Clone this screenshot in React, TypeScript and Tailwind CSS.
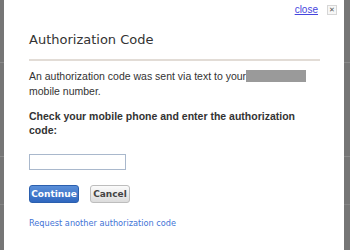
import React from "react";

function Strip({ w }: { w: string }) {
  return (
    <div className={`${w} h-full bg-[#767676] flex flex-col`}>
      <div className="h-[63px] border-b border-[#8a8a8a]" />
      <div className="h-[94px] border-b border-[#8a8a8a]" />
      <div className="h-[48px] border-b border-[#858585]" />
      <div className="flex-1" />
    </div>
  );
}

export default function App() {
  return (
    <div className="w-[350px] h-[250px] overflow-hidden flex bg-[#767676]">
      <Strip w="w-[4px]" />
      <div className="w-[340px] h-full bg-white flex flex-col">
        <div className="flex justify-end items-center gap-[9px] pr-[7px] pt-[4px] h-[15px]">
          <a className="text-[10px] leading-none text-[#4545dd] underline" style={{ fontFamily: '"Liberation Sans", Arial, sans-serif' }}>close</a>
          <span className="w-[10px] h-[10px] border border-[#d6d6d6] bg-[#f7f7f7] flex items-center justify-center text-[7px] leading-none text-[#555]">✕</span>
        </div>
        <div className="pl-[25px] pr-[24px]" style={{ fontFamily: '"Liberation Sans", Arial, sans-serif' }}>
          <h1 className="mt-[16px] text-[13px] leading-[18px] text-[#333]" style={{ fontFamily: '"DejaVu Sans", Verdana, sans-serif' }}>Authorization Code</h1>
          <div className="mt-[10px] h-[2px] bg-[#e2dcd6]" />
          <p className="mt-[8px] text-[10.5px] leading-[15px] text-[#333]">
            An authorization code was sent via text to your<span className="inline-block align-top mt-[1px] w-[60px] h-[12px] bg-[#9a9a9a]" />
            <br />mobile number.
          </p>
          <p className="mt-[10px] text-[10.5px] leading-[14px] font-bold text-[#333]">
            Check your mobile phone and enter the authorization code:
          </p>
          <div className="mt-[17px] w-[97px] h-[16px] border border-[#a9b8cc] bg-white" />
          <div className="mt-[15px] flex gap-[11px]" style={{ fontFamily: '"DejaVu Sans", Verdana, sans-serif' }}>
            <button className="w-[50px] h-[18px] rounded-[3px] bg-gradient-to-b from-[#5a8fd8] to-[#2f67bf] border border-[#2b5fae] text-white text-[9px] font-bold leading-none">Continue</button>
            <button className="w-[40px] h-[18px] rounded-[3px] bg-gradient-to-b from-[#fbfbfb] to-[#dcdcdc] border border-[#bdbdbd] text-[#444] text-[9px] font-bold leading-none">Cancel</button>
          </div>
          <a className="block mt-[14px] text-[8.2px] leading-[12px] text-[#3f74d6]" style={{ fontFamily: '"DejaVu Sans", Verdana, sans-serif' }}>Request another authorization code</a>
        </div>
      </div>
      <Strip w="w-[6px]" />
    </div>
  );
}
